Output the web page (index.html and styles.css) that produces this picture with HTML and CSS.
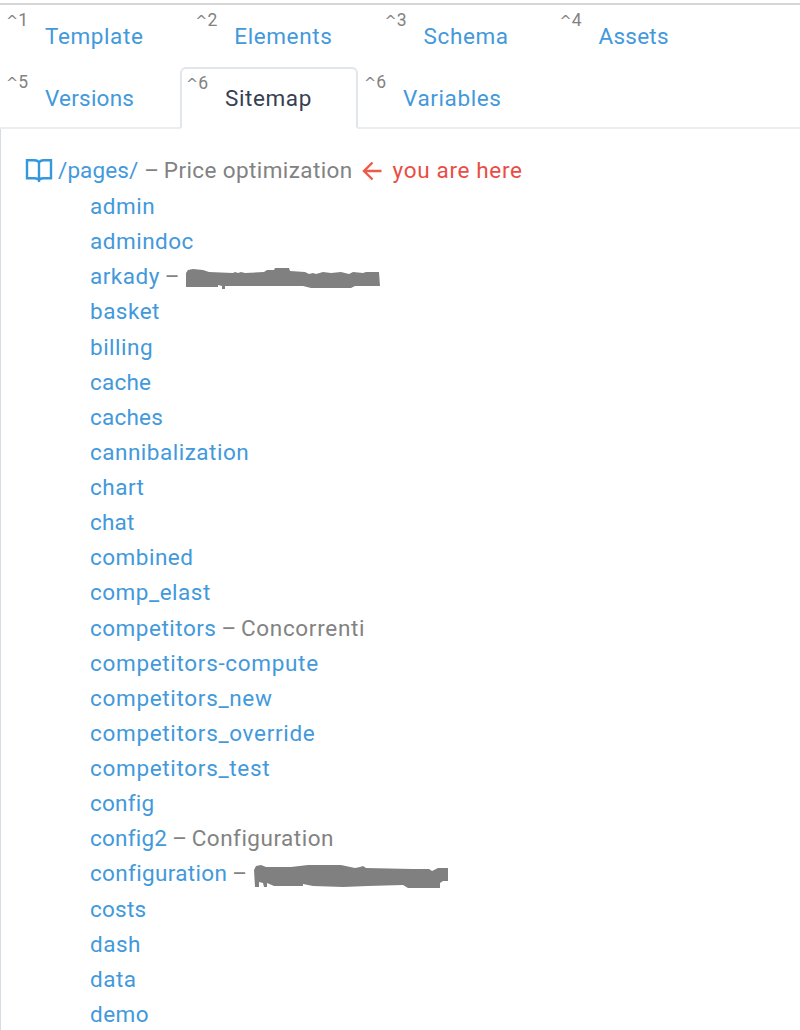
FILE: index.html
```html
<!DOCTYPE html>
<html lang="en">
<head>
<meta charset="utf-8">
<title>Sitemap</title>
<link rel="stylesheet" href="styles.css">
</head>
<body>
<nav class="tabs">
  <div class="tab-row">
    <a class="tab wide"><span class="key"><span class="caret">^</span>1</span><span class="label">Template</span></a>
    <a class="tab wide"><span class="key"><span class="caret">^</span>2</span><span class="label">Elements</span></a>
    <a class="tab medium"><span class="key"><span class="caret">^</span>3</span><span class="label">Schema</span></a>
    <a class="tab"><span class="key"><span class="caret">^</span>4</span><span class="label snug">Assets</span></a>
  </div>
  <div class="tab-row last">
    <a class="tab versions"><span class="key"><span class="caret">^</span>5</span><span class="label snug">Versions</span></a>
    <a class="tab active"><span class="key"><span class="caret">^</span>6</span><span class="label">Sitemap</span></a>
    <a class="tab rest"><span class="key"><span class="caret">^</span>6</span><span class="label">Variables</span></a>
  </div>
</nav>
<main class="panel">
  <div class="root">
    <svg class="book" viewBox="0 0 28 26" width="28" height="26"><path d="M14 4.500C13.200 3 11.500 2.200 9.500 2.200H2V20.300H9.500C12 20.300 14 20.800 14 23C14 20.800 16 20.300 18.500 20.300H26V2.200H18.500C16.500 2.200 14.800 3 14 4.500V24"/></svg>
    <a class="path">/pages/</a><span class="title"><span class="dash">–</span>Price optimization</span>
    <svg class="arrow" viewBox="0 0 20 20" width="20" height="20"><path d="M19.500 10H1.800M10.500 1.500L2 10L10.500 18.500"/></svg>
    <span class="here">you are here</span>
  </div>
  <ul class="pages">
    <li><a>admin</a></li>
    <li><a>admindoc</a></li>
    <li><a>arkady</a><span class="title"><span class="dash">–</span></span><svg class="redacted" viewBox="0 0 196 24" width="196" height="24"><path d="M1 5L3 2L8 1L18 2L24 4L48 5L50 4L53 5L56 4L60 5L79 4L82 2L89 2L90 0H104L105 3L120 4L124 6L128 5L131 6L138 4L146 5L156 4L164 6L168 4L178 5L181 4L194 4L195 18L170 18L166 20H126L118 18L40 18V21H37V18L33 17V19H1Z"/></svg></li>
    <li><a>basket</a></li>
    <li><a>billing</a></li>
    <li><a class="snug">cache</a></li>
    <li><a class="snug">caches</a></li>
    <li><a>cannibalization</a></li>
    <li><a>chart</a></li>
    <li><a class="snug">chat</a></li>
    <li><a>combined</a></li>
    <li><a>comp_elast</a></li>
    <li><a>competitors</a><span class="title loose"><span class="dash">–</span>Concorrenti</span></li>
    <li><a class="loose">competitors-compute</a></li>
    <li><a class="loose">competitors_new</a></li>
    <li><a class="loose">competitors_override</a></li>
    <li><a class="loose">competitors_test</a></li>
    <li><a class="snug">config</a></li>
    <li><a class="snug">config2</a><span class="title"><span class="dash">–</span>Configuration</span></li>
    <li><a class="mid">configuration</a><span class="title"><span class="dash">–</span></span><svg class="redacted" viewBox="0 0 196 24" width="196" height="24"><path d="M1 5L3 1L8 0L13 2L38 2L55 0H88L102 3L107 2L110 1L113 3L160 4L176 4L179 6L185 3H195V16H190L187 18V23L155 23L150 20L115 21L90 22L60 21L50 19V21H21L14 18V22H11L10 18L6 17V22H2Z"/></svg></li>
    <li><a class="snug">costs</a></li>
    <li><a>dash</a></li>
    <li><a>data</a></li>
    <li><a>demo</a></li>
  </ul>
</main>
</body>
</html>
```
FILE: styles.css
```css
* { box-sizing: border-box; }
body {
  margin: 0;
  height: 1030px;
  overflow: hidden;
  background: #fff;
  color: #828282;
  font: 22.5px/35.13px Roboto, "Noto Sans", sans-serif;
  letter-spacing: 0.5px;
}
a { color: #4299db; }
.snug { letter-spacing: 0.22px; }
.mid { letter-spacing: 0.34px; }
.loose { letter-spacing: 0.68px; }
.tabs { margin-top: 3px; border-top: 2px solid #d6d6d6; }
.tab-row { display: flex; height: 62px; }
.tab { display: flex; width: 180px; padding: 0 0 0 6px; }
.tab.wide { width: 189.3px; }
.tab.medium { width: 175px; }
.key { width: 39px; font-size: 17.500px; line-height: 30px; letter-spacing: 0; color: #828282; }
.caret { font-family: "DejaVu Sans", sans-serif; font-size: 14.500px; }
.label { line-height: 62px; }
.tab .label:not(.snug) { letter-spacing: 0.6px; }
.tab-row.last .tab { border-bottom: 2px solid #e9eef0; }
.tab-row.last .tab.active {
  width: 178px;
  padding-left: 4px;
  border: 2px solid #e1e6ea;
  border-bottom-color: #fff;
  border-radius: 6px 6px 0 0;
}
.active .label { color: #354052; line-height: 59px; }
.active .key { line-height: 28px; }
.tab-row.last .rest { flex: 1; }
.panel { height: 901px; padding: 24px 0 0 24px; border-left: 1px solid #d6dce1; }
.root { display: flex; height: 36px; align-items: center; white-space: nowrap; }
.book { margin: 0 5px 0 0; fill: none; stroke: #3498db; stroke-width: 2.400; }
.path { margin-right: 7px; letter-spacing: 0.1px; }
.root .title { letter-spacing: 0.4px; }
.dash { display: inline-block; width: 19.500px; margin-left: -1px; letter-spacing: 0; }
.arrow { margin: 0 11px 0 9px; fill: none; stroke: #ed5a4a; stroke-width: 2.400; }
.here { color: #e94d43; letter-spacing: 0.65px; }
.pages { margin: 0; padding: 0 0 0 65px; list-style: none; }
.pages li { display: flex; align-items: center; height: 35.130px; white-space: nowrap; }
.pages .title { margin-left: 6px; }
.redacted { margin: 6px 0 0 1px; fill: #808080; }
```
